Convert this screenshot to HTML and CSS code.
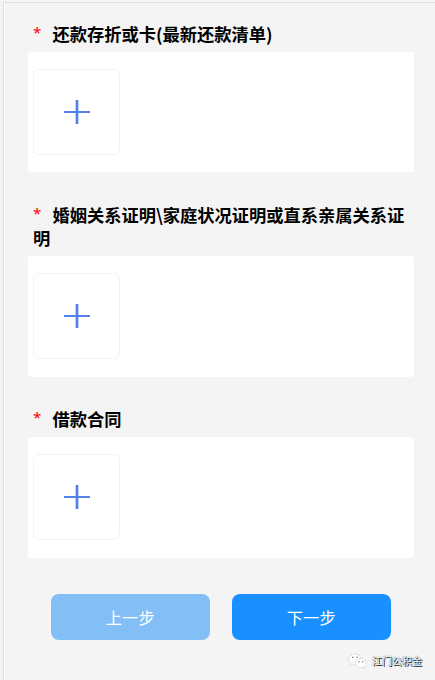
FILE: index.html
```html
<!DOCTYPE html>
<html lang="zh-CN">
<head>
    <meta charset="UTF-8">
    <meta name="viewport" content="width=device-width, initial-scale=1.0">
    <title>上传材料</title>
    <link rel="stylesheet" href="styles.css">
</head>
<body>
    <div class="page">
        <div class="item">
            <h3 class="title"><span class="star">*</span>还款存折或卡(最新还款清单)</h3>
            <div class="upload">
                <a href="javascript:;" class="add">
                    <svg width="26" height="24" viewBox="0 0 26 24"><path class="soft" d="M13 0v24"/><path d="M13 0v24M0 12h26"/></svg>
                </a>
            </div>
        </div>
        <div class="item">
            <h3 class="title"><span class="star">*</span>婚姻关系证明\家庭状况证明或直系亲属关系证明</h3>
            <div class="upload">
                <a href="javascript:;" class="add">
                    <svg width="26" height="24" viewBox="0 0 26 24"><path class="soft" d="M13 0v24"/><path d="M13 0v24M0 12h26"/></svg>
                </a>
            </div>
        </div>
        <div class="item">
            <h3 class="title"><span class="star">*</span>借款合同</h3>
            <div class="upload">
                <a href="javascript:;" class="add">
                    <svg width="26" height="24" viewBox="0 0 26 24"><path class="soft" d="M13 0v24"/><path d="M13 0v24M0 12h26"/></svg>
                </a>
            </div>
        </div>
        <div class="btns">
            <a href="javascript:;" class="btn prev">上一步</a>
            <a href="javascript:;" class="btn next">下一步</a>
        </div>
    </div>
    <!-- 右下角公众号水印 -->
    <div class="mark">
        <svg class="wechat" width="19" height="16" viewBox="0 0 19 16">
            <path class="shadow" d="M7 1C3.400 1 .7 3.300.7 6.200c0 1.700.9 3.100 2.300 4l-.5 2 2.200-1.200c.7.200 1.500.3 2.300.3 3.600 0 6.400-2.300 6.400-5.200S10.600 1 7 1z"/>
            <path class="shadow" d="M12.700 5.500c-3 0-5.300 2-5.300 4.500s2.300 4.500 5.300 4.500c.7 0 1.300-.1 1.900-.3l1.800 1-.4-1.700c1.200-.8 2-2 2-3.500 0-2.500-2.300-4.500-5.300-4.500z"/>
            <circle cx="4.800" cy="4.200" r=".8"/>
            <circle cx="9" cy="4.200" r=".8"/>
            <circle cx="11" cy="8.700" r=".7"/>
            <circle cx="14.500" cy="8.700" r=".7"/>
        </svg>
        <span>江门公积金</span>
    </div>
</body>
</html>
```
FILE: styles.css
```css
*{
    margin: 0;
    padding: 0;
    box-sizing: border-box;
}
body {
    height: 680px;
    padding: 2px 0 0 3px;
    overflow: hidden;
    background-color: #f4f4f4;
    font-family: "Noto Sans CJK SC", sans-serif;
}
a {
    text-decoration: none;
}
.page {
    height: 678px;
    padding: 19px 21.5px 0 24px;
    border-top: 1px solid #dedede;
    border-left: 1px solid #dedede;
    box-shadow: inset 1px 0 0 #fff;
}
.item {
    margin-bottom: 30.8px;
}
.title {
    padding: 0 5px;
    margin-bottom: 7px;
    font-size: 17.26px;
    line-height: 23px;
    font-weight: bold;
    color: #000;
}
.star {
    display: inline-block;
    width: 19.6px;
    height: 12px;
    font-family: "Noto Sans", sans-serif;
    font-size: 15px;
    line-height: 12px;
    font-weight: normal;
    vertical-align: 3px;
    color: #f00;
}
.upload {
    height: 120.4px;
    padding: 16.6px 5px;
    border-radius: 4px;
    background-color: #fff;
}
.add {
    display: flex;
    justify-content: center;
    align-items: center;
    width: 87px;
    height: 86px;
    border: 1px solid #f2f2f2;
    border-radius: 6px;
}
.add svg {
    fill: none;
    stroke: #5380ea;
    stroke-width: 2;
}
.add .soft {
    stroke: #c3d3f8;
    stroke-width: 4;
}
.btns {
    display: flex;
    gap: 22.5px;
    padding: 5.3px 0 0 23px;
}
.btn {
    width: 158.5px;
    height: 46.5px;
    border-radius: 8px;
    font-size: 16.3px;
    line-height: 47px;
    text-align: center;
    color: #fff;
}
.prev {
    background-color: #83bef6;
}
.next {
    background-color: #1890ff;
}
.mark {
    position: absolute;
    right: 13px;
    bottom: 11px;
    display: flex;
    align-items: center;
    gap: 5px;
    font-size: 10px;
    line-height: 16px;
    color: #fff;
    text-shadow: 1px 1px 0 #222, 0 0 1px #222;
}
.wechat {
    fill: #777;
}
.wechat .shadow {
    fill: #fff;
    stroke: #bbb;
    stroke-width: .6;
    stroke-dasharray: 2 1;
}
```
